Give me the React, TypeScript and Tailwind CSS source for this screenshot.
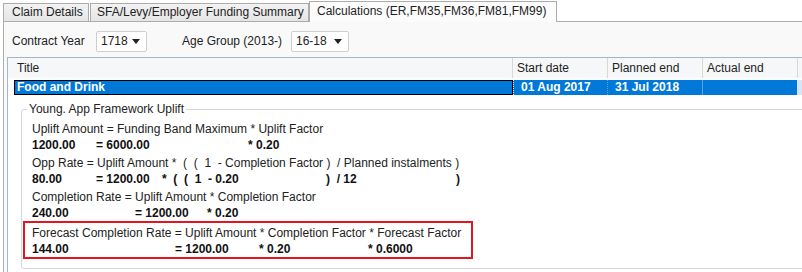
import React from "react";

function Arrow() {
  return (
    <svg width="8" height="5" viewBox="0 0 8 5" className="shrink-0">
      <path d="M0 0 H8 L4 5 Z" fill="#222" />
    </svg>
  );
}

function Select({ value, width }: { value: string; width: string }) {
  return (
    <div
      className={`${width} h-[21px] flex items-center justify-between pl-[4px] pr-[6px] bg-white border border-[#cfcfcf] rounded-[2px]`}
    >
      <span>{value}</span>
      <Arrow />
    </div>
  );
}

type Val = [string, number];

function Group({ formula, values }: { formula: string; values: Val[] }) {
  return (
    <div className="flex flex-col whitespace-pre">
      <div className="h-[16px] leading-[16px]">{formula}</div>
      <div className="h-[16px] leading-[16px] font-bold text-[#111] flex">
        {values.map(([v, w], i) => (
          <span key={i} className="shrink-0" style={w ? { width: w } : undefined}>
            {v}
          </span>
        ))}
      </div>
    </div>
  );
}

export default function App() {
  return (
    <div className="w-[802px] h-[272px] overflow-hidden bg-white flex flex-col font-['Liberation_Sans',Arial,sans-serif] text-[12px] leading-[15px] text-[#222]">
      {/* Tabs */}
      <div className="flex items-end h-[21px] pl-[3px] shrink-0">
        <div className="w-[86px] h-[18px] pl-[8px] flex items-center border border-b-0 border-[#acacac] bg-gradient-to-b from-[#f3f3f3] to-[#e5e5e5]">
          Claim Details
        </div>
        <div className="ml-[1px] w-[219px] h-[18px] pl-[6px] flex items-center border border-b-0 border-[#acacac] bg-gradient-to-b from-[#f3f3f3] to-[#e5e5e5]">
          SFA/Levy/Employer Funding Summary
        </div>
        <div className="relative z-10 -mb-px w-[248px] h-[21px] pl-[7px] pb-[2px] flex items-center border border-b-0 border-[#acacac] bg-[#fcfcfc]">
          Calculations (ER,FM35,FM36,FM81,FM99)
        </div>
      </div>

      {/* Panel */}
      <div className="flex-1 ml-[3px] border-t border-l border-[#acacac] bg-[#f9f9f9] flex flex-col pt-[9px]">
        <div className="flex items-center h-[21px] pl-[8px]">
          <span className="w-[84px]">Contract Year</span>
          <Select value="1718" width="w-[51px]" />
          <span className="ml-[35px] w-[109px]">Age Group (2013-)</span>
          <Select value="16-18" width="w-[58px]" />
        </div>

        {/* Grid */}
        <div className="flex-1 mt-[5px] ml-[3px] border-t border-l border-[#a6b6ca] bg-white flex flex-col">
          {/* Header */}
          <div className="flex h-[20px] bg-[#f6f7f9] shrink-0">
            <div className="w-[505px] pl-[9px] flex items-center border-r border-[#dcd8d0]">Title</div>
            <div className="w-[95px] pl-[4px] flex items-center border-r border-[#dcd8d0]">Start date</div>
            <div className="w-[95px] pl-[4px] flex items-center border-r border-[#dcd8d0]">Planned end</div>
            <div className="w-[95px] pl-[4px] flex items-center border-r border-[#dcd8d0]">Actual end</div>
            <div className="flex-1" />
          </div>

          {/* Selected row */}
          <div className="flex h-[15px] mt-[2px] ml-[6px] shrink-0 font-bold text-white">
            <div className="w-[499px] pl-[2px] flex items-center bg-[#0078d7] border border-black leading-[13px]">
              Food and Drink
            </div>
            <div className="w-[95px] pl-[7px] flex items-center bg-[#0078d7] border-r border-[#5aa2e4] border-l border-dotted border-l-[#e8e8e8]">
              01 Aug 2017
            </div>
            <div className="w-[95px] pl-[7px] flex items-center bg-[#0078d7] border-r border-[#5aa2e4]">
              31 Jul 2018
            </div>
            <div className="w-[94px] bg-[#0078d7]" />
            <div className="flex-1 bg-[#d6e6f5]" />
          </div>

          {/* Detail */}
          <div className="ml-[13px] mt-[7px]">
            <fieldset className="w-[820px] border border-[#d3d9e0] rounded-[3px] pl-[1px] pb-[9px]">
              <legend className="ml-[4px] px-[2px] leading-[15px]">Young. App Framework Uplift</legend>
              <div className="flex flex-col mt-[4px]">
                <div className="pl-[9px]">
                  <Group
                    formula="Uplift Amount = Funding Band Maximum * Uplift Factor"
                    values={[
                      ["1200.00", 64],
                      ["= 6000.00", 152],
                      ["* 0.20", 0],
                    ]}
                  />
                </div>
                <div className="pl-[9px] mt-[2px]">
                  <Group
                    formula="Opp Rate = Uplift Amount *  (  (  1  - Completion Factor )  / Planned instalments )"
                    values={[
                      ["80.00", 64],
                      ["= 1200.00", 66],
                      ["*  (  (  1  - 0.20", 164],
                      [")  / 12", 130],
                      [")", 0],
                    ]}
                  />
                </div>
                <div className="pl-[9px] mt-[2px]">
                  <Group
                    formula="Completion Rate = Uplift Amount * Completion Factor"
                    values={[
                      ["240.00", 103],
                      ["= 1200.00", 72],
                      ["* 0.20", 0],
                    ]}
                  />
                </div>
                <div className="w-[450px] border-2 border-[#e3161f] pl-[7px] pt-[2px]">
                  <Group
                    formula="Forecast Completion Rate = Uplift Amount * Completion Factor * Forecast Factor"
                    values={[
                      ["144.00", 143],
                      ["= 1200.00", 84],
                      ["* 0.20", 109],
                      ["* 0.6000", 0],
                    ]}
                  />
                </div>
              </div>
            </fieldset>
          </div>
        </div>
      </div>
    </div>
  );
}
